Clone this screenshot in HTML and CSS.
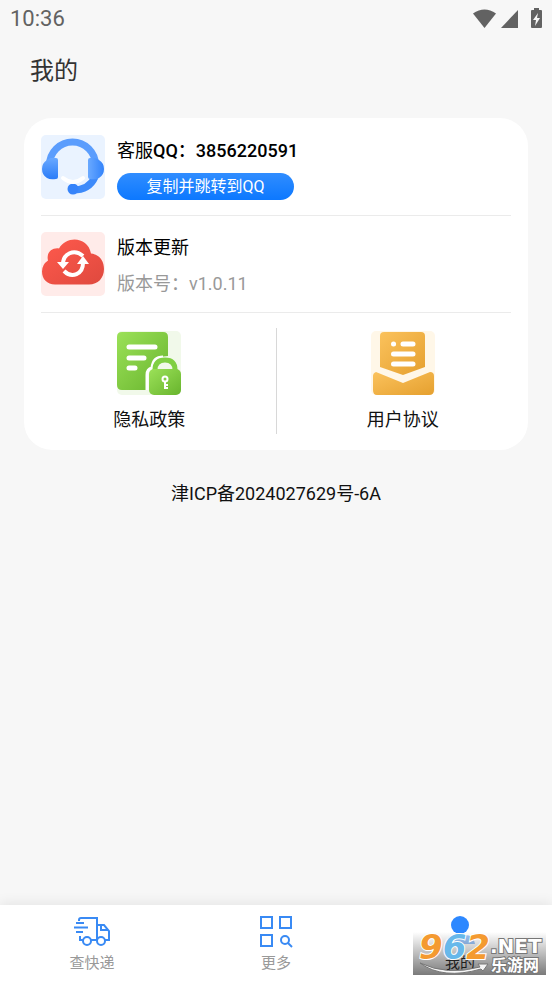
FILE: index.html
```html
<!DOCTYPE html>
<html lang="zh-CN">
<head>
<meta charset="utf-8">
<meta name="viewport" content="width=device-width, initial-scale=1">
<title>我的</title>
<link rel="stylesheet" href="styles.css">
</head>
<body>
<div class="status">
  <span>10:36</span>
  <svg class="status-icons" width="72" height="22" viewBox="0 0 72 22" fill="#626262" aria-hidden="true">
    <path d="M1 5.500Q12.500-2.500 24 5.500L12.500 20Z"/>
    <path d="M46 2V20H29Z"/>
    <path fill-rule="evenodd" d="M62 0h5v2h2q1 0 1 1v16q0 1-1 1h-9q-1 0-1-1V3q0-1 1-1h2ZM66 5l-5 7h3l-1 6 5-8h-3Z"/>
  </svg>
</div>
<header class="title"><h1>我的</h1></header>
<main>
  <section class="card">
    <div class="row">
      <svg class="tile" viewBox="0 0 64 64" aria-hidden="true">
        <defs>
          <linearGradient id="blue" x1="0" y1="0" x2="0" y2="1"><stop offset="0" stop-color="#6aa9ff"/><stop offset="1" stop-color="#2a7cf8"/></linearGradient>
          <linearGradient id="blueSide" x1="0" y1="0" x2="1" y2="0"><stop offset="0" stop-color="#6aa9ff"/><stop offset="1" stop-color="#3283fb"/></linearGradient>
        </defs>
        <rect width="64" height="64" rx="5" fill="#eaf3ff"/>
        <path d="M8.500 30A23 23 0 0 1 54.500 30" fill="none" stroke="#5b9dfd" stroke-width="7"/>
        <path d="M54 42C50 51 43 55 32 55" fill="none" stroke="#3d8afa" stroke-width="7"/>
        <path d="M17 25q0-2-2-2-5-1-9 2-5 3-5 9t5 9q3 2 9 1 2 0 2-2Z" fill="url(#blue)"/>
        <path d="M47 25q0-2 2-2 5-1 9 2 5 3 5 9t-5 9q-3 2-9 1-2 0-2-2Z" fill="url(#blueSide)"/>
        <circle cx="32" cy="54" r="5.500" fill="#3784fa"/>
        <path d="M22 43q10 8 20 0" fill="none" stroke="#fff" stroke-width="4" stroke-linecap="round"/>
      </svg>
      <div class="info">
        <p class="name">客服<b>QQ：3856220591</b></p>
        <button class="copy" type="button">复制并跳转到QQ</button>
      </div>
    </div>
    <div class="row">
      <svg class="tile" viewBox="0 0 64 64" aria-hidden="true">
        <defs><linearGradient id="red" x1="0" y1="0" x2="1" y2="1"><stop offset="0" stop-color="#ff5a4d"/><stop offset="1" stop-color="#df493e"/></linearGradient></defs>
        <rect width="64" height="64" rx="5" fill="#ffebe9"/>
        <path d="M14 52.500C6 52.500 1 47 1 39.500q0-7 6-11c-2-8 4-13 11-12C26 3 47 5 50 21.500c9 1 13 8 13 15.500 0 9-6 15.500-15 15.500Z" fill="url(#red)"/>
        <g fill="none" stroke="#fff" stroke-width="4"><path d="M42 24C33 16 22 22 22 32"/><path d="M23 39c8 8 19 3 19-8"/></g>
        <path d="M16 30h12l-6 7ZM36 32h12l-6-8Z" fill="#fff"/>
      </svg>
      <div class="info">
        <p class="name">版本更新</p>
        <p class="version">版本号：v1.0.11</p>
      </div>
    </div>
    <div class="links">
      <a class="link" href="#privacy">
        <svg class="tile" viewBox="0 0 64 64" aria-hidden="true">
          <defs><linearGradient id="green" x1="0" y1="0" x2="1" y2="1"><stop offset="0" stop-color="#9be158"/><stop offset="1" stop-color="#68b42d"/></linearGradient></defs>
          <rect width="64" height="64" rx="5" fill="#f1f9ea"/>
          <path d="M5 1h41q5 0 5 5v19q-10 0-13 9-8 2-8 9v16H5q-5 0-5-5V6q0-5 5-5Z" fill="url(#green)"/>
          <path d="M30 59V44q0-6 5-7 1-11 11-11" fill="none" stroke="#fff" stroke-width="3"/>
          <path d="M12 16h26M12 27h15M12 37h6" stroke="#fff" stroke-width="5" stroke-linecap="round"/>
          <path d="M38 42v-3q0-10 10-10t10 10v3" fill="none" stroke="#80cf43" stroke-width="5"/>
          <rect x="32" y="38" width="32" height="26" rx="5" fill="url(#green)"/>
          <circle cx="48" cy="48" r="2.500" fill="none" stroke="#fff" stroke-width="2"/>
          <path d="M48 50v8m0-4h3m-3 3h3" stroke="#fff" stroke-width="2"/>
        </svg>
        <span>隐私政策</span>
      </a>
      <a class="link" href="#agreement">
        <svg class="tile" viewBox="0 0 64 64" aria-hidden="true">
          <defs><linearGradient id="gold" x1="0" y1="0" x2="1" y2="1"><stop offset="0" stop-color="#fbc25c"/><stop offset="1" stop-color="#e5a02f"/></linearGradient></defs>
          <rect width="64" height="64" rx="5" fill="#fff7e8"/>
          <path d="M13 1h37q4 0 4 4v31L32 44 9 36V5q0-4 4-4Z" fill="url(#gold)"/>
          <path d="M5 41l27 11 27-11q4 0 4 4v14q0 5-5 5H6q-4 0-4-5V45q0-3 3-4Z" fill="url(#gold)"/>
          <path d="M22.500 13h.1M32 13h10M22.500 23H42M22.500 33H42" stroke="#fff" stroke-width="5" stroke-linecap="round"/>
        </svg>
        <span>用户协议</span>
      </a>
    </div>
  </section>
  <p class="icp">津ICP备2024027629号-6A</p>
</main>
<nav class="tabs">
  <a class="tab" href="#track">
    <svg width="38" height="36" viewBox="0 0 38 36" fill="none" stroke="#398af4" stroke-width="2" aria-hidden="true">
      <path d="M6 8V7q0-2 2-2h16v22h-6M10 27H7v-4M24 12h7l5 6v9h-4M28 12v5h7"/>
      <path d="M3 10h8M1 14.500h14M3 19h7"/>
      <circle cx="14" cy="28" r="4"/><circle cx="28" cy="28" r="4"/>
    </svg>
    <span>查快递</span>
  </a>
  <a class="tab" href="#more">
    <svg width="38" height="36" viewBox="0 0 38 36" fill="none" stroke="#398af4" stroke-width="2" aria-hidden="true">
      <path d="M4 4h11v11H4ZM23 4h11v11H23ZM4 22h11v11H4Z"/><circle cx="28" cy="27" r="4"/><path d="M31 30l4 4"/>
    </svg>
    <span>更多</span>
  </a>
  <a class="tab active" href="#mine">
    <svg width="38" height="36" viewBox="0 0 38 36" fill="#2d88ff" aria-hidden="true">
      <circle cx="19" cy="12" r="9"/><path d="M5 31q0-9 9-9h10q9 0 10 9Z" fill="#9cc6fa"/>
    </svg>
    <span>我的</span>
  </a>
  <svg class="stamp" width="133" height="43" viewBox="0 0 133 43" role="img" aria-label="962.NET 乐游网">
    <defs><linearGradient id="shade" x1="0" y1="0" x2="0" y2="1"><stop offset="0" stop-color="#000" stop-opacity="0"/><stop offset="1" stop-color="#000" stop-opacity=".52"/></linearGradient></defs>
    <rect width="133" height="43" fill="url(#shade)"/>
    <path d="M7 31Q34 44 67 35l-2-3 10 0-5 7-2-2Q30 48 7 31Z" fill="#f5f5f5" stroke="#777"/>
    <text class="stamp-number" x="6" y="27"><tspan fill="#f49a30">9</tspan><tspan fill="#67b8ea">6</tspan><tspan fill="#f49a30">2</tspan></text>
    <text class="stamp-net" x="77" y="21">.NET</text>
    <text class="stamp-site" x="78" y="39">乐游网</text>
  </svg>
</nav>
</body>
</html>
```
FILE: styles.css
```css
* { box-sizing: border-box; }
body {
  margin: 0;
  min-height: 100vh;
  display: flex;
  flex-direction: column;
  background: #f7f7f7;
  color: #111;
  font-family: Roboto, "Noto Sans CJK SC", sans-serif;
  font-size: 18px;
  line-height: 24px;
}
h1, p { margin: 0; }
a { color: inherit; text-decoration: none; }
svg { display: block; }
.status {
  display: flex;
  justify-content: space-between;
  align-items: center;
  height: 38px;
  padding: 0 8px 0 10px;
  color: #626262;
  font-size: 22px;
}
.title { padding: 17px 30px 15px; }
h1 {
  font-size: 24px;
  line-height: 32px;
  font-weight: 400;
  color: #333;
}
main { flex: 1; }
.card {
  margin: 16px 24px 0;
  padding: 1px 17px 16px;
  border-radius: 28px;
  background: #fff;
}
.row {
  display: flex;
  gap: 12px;
  padding: 16px 0;
  border-bottom: 1px solid #ebebeb;
}
.tile {
  width: 64px;
  height: 64px;
}
.info {
  display: flex;
  flex-direction: column;
  justify-content: space-between;
  align-items: flex-start;
  padding-top: 4px;
}
.name { color: #000; }
.name b { font-weight: 500; }
.copy {
  width: 177px;
  height: 27px;
  margin-bottom: -1px;
  padding: 0;
  border: 0;
  border-radius: 14px;
  background: linear-gradient(#308dff, #0c78ff);
  color: #fff;
  font: inherit;
  font-size: 16px;
}
.version { color: #999; }
.links {
  display: flex;
  padding-top: 15px;
}
.link {
  flex: 1;
  display: flex;
  flex-direction: column;
  align-items: center;
  gap: 13px;
  height: 106px;
  padding: 3px 18px 0 0;
  border-right: 1px solid #d8d8d8;
}
.link + .link {
  border-right: 0;
  padding: 3px 0 0 18px;
}
.icp {
  margin-top: 32px;
  text-align: center;
}
.tabs {
  position: relative;
  display: flex;
  height: 76px;
  background: #fff;
  box-shadow: 0 -2px 12px rgba(0, 0, 0, .08);
}
.tab {
  flex: 1;
  display: flex;
  flex-direction: column;
  align-items: center;
  gap: 4px;
  padding-top: 8px;
  color: #999;
  font-size: 15px;
  line-height: 20px;
}
.active { color: #333; }
.stamp {
  position: absolute;
  right: 6px;
  bottom: 6px;
  overflow: visible;
}
.stamp-number {
  font: italic 700 34px "DejaVu Sans", sans-serif;
  stroke: #fff;
  stroke-width: 2px;
  paint-order: stroke;
}
.stamp-net, .stamp-site {
  fill: #fff;
  stroke: #777;
  stroke-width: 2px;
  paint-order: stroke;
}
.stamp-net { font: 700 20px "DejaVu Sans", sans-serif; }
.stamp-site { font: 700 16px "Noto Sans CJK SC", sans-serif; }
```
